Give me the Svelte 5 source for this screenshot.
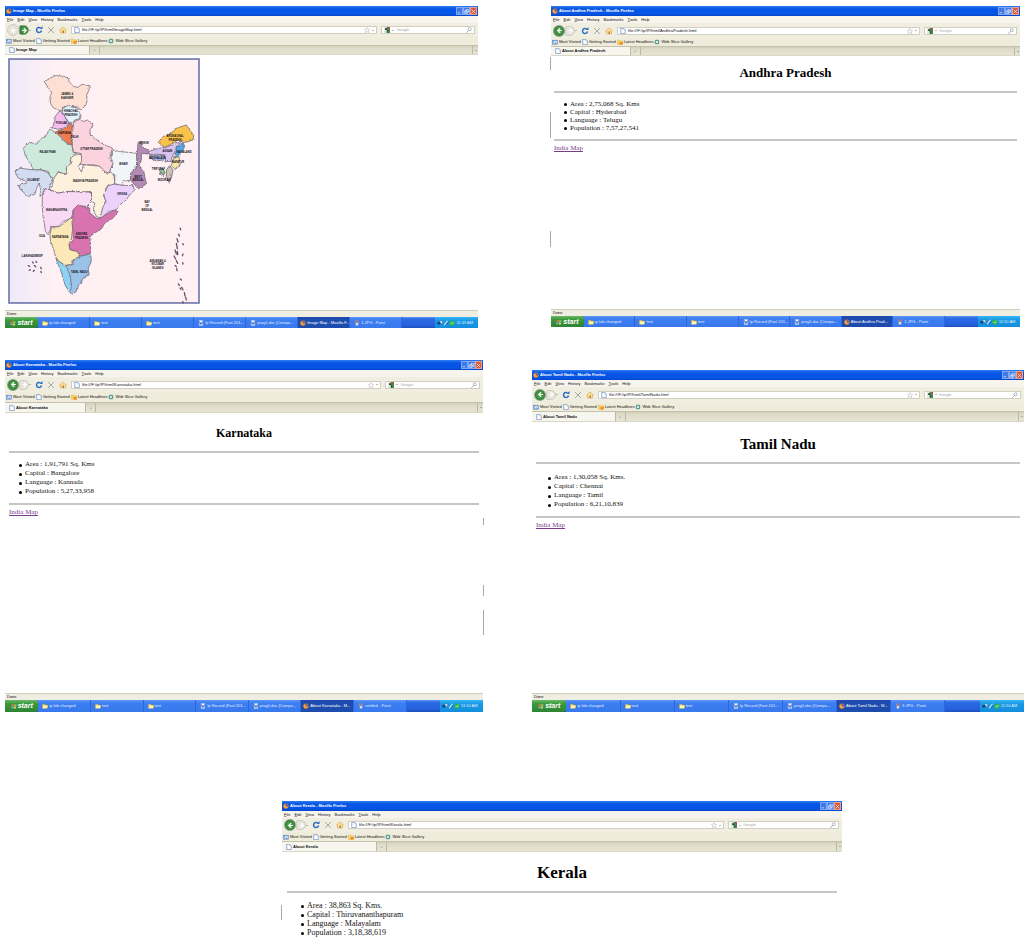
<script>
  const menus = ['File', 'Edit', 'View', 'History', 'Bookmarks', 'Tools', 'Help'];

  const windows = [
    { id: 'map', title: 'Image Map', task: 'Image Map - Mozilla F...', file: 'ImageMap', place: 'w1', map: true, paint: '1.JPG - Paint', time: '11:49 AM', marks: [] },
    {
      id: 'andhra', title: 'About Andhra Pradesh', task: 'About Andhra Prad...', file: 'AndhraPradesh', place: 'w2', heading: 'Andhra Pradesh',
      facts: ['Area : 2,75,068 Sq. Kms', 'Capital : Hyderabad', 'Language : Telugu', 'Population : 7,57,27,541'],
      link: true, paint: '1.JPG - Paint', time: '11:50 AM',
      marks: [[16, 4], [33, 8], [70, 5]]
    },
    {
      id: 'karnataka', title: 'About Karnataka', task: 'About Karnataka - M...', file: 'Karnataka', place: 'w3', heading: 'Karnataka',
      facts: ['Area : 1,91,791 Sq. Kms', 'Capital : Bangalore', 'Language : Kannada', 'Population : 5,27,33,958'],
      link: true, paint: 'untitled - Paint', time: '11:50 AM',
      marks: [[45, 2], [64, 3], [71, 7]]
    },
    {
      id: 'tamil', title: 'About Tamil Nadu', task: 'About Tamil Nadu - M...', file: 'TamilNadu', place: 'w4', heading: 'Tamil Nadu',
      facts: ['Area : 1,30,058 Sq. Kms.', 'Capital : Chennai', 'Language : Tamil', 'Population : 6,21,10,839'],
      link: true, paint: '3.JPG - Paint', time: '11:50 AM', marks: []
    },
    {
      id: 'kerala', title: 'About Kerala', file: 'Kerala', place: 'w5', heading: 'Kerala',
      facts: ['Area : 38,863 Sq. Kms.', 'Capital : Thiruvananthapuram', 'Language : Malayalam', 'Population : 3,18,38,619'],
      marks: [[73, 10]]
    }
  ];

  const rows = [windows.slice(0, 2), windows.slice(2, 4), windows.slice(4)];

  const states = [
    ['#fde0d3', 'M133 80L150 70 165 62 190 63 205 70 208 80 222 95 235 97 245 88 258 90 268 92 268 105 260 120 262 135 258 150 243 165 230 155 215 155 192 155 185 168 170 163 158 157 152 145 150 128 155 112 145 98Z'],
    ['#e3f4fb', 'M188 160L205 151 215 157 230 158 240 175 243 190 225 195 215 207 205 200 195 185 187 172Z'],
    ['#f5bdf0', 'M180 168L190 175 200 195 208 205 195 218 175 223 155 218 165 200 165 185Z'],
    ['#ee7c50', 'M165 232L180 225 200 220 208 205 218 210 215 230 218 245 212 250 218 265 210 270 200 262 190 262 185 245 175 240Z'],
    ['#fbd3df', 'M222 200L240 193 250 200 262 195 280 210 270 225 272 240 300 262 320 272 338 280 332 300 330 315 340 325 330 350 320 355 300 335 280 330 260 330 240 328 245 310 240 295 220 292 218 270 215 250 218 230Z'],
    ['#cdeadc', 'M150 222L170 235 185 250 200 265 215 270 220 292 235 300 210 315 215 325 200 340 195 360 175 350 165 372 150 365 145 350 125 345 100 345 90 325 75 300 70 280 90 262 110 268 125 250 140 240Z'],
    ['#d3dcf0', 'M45 350L60 340 100 345 125 345 145 355 158 375 150 395 145 410 135 400 128 418 120 425 122 405 118 385 110 400 105 418 85 425 62 405 55 392 80 385 75 378 55 370Z'],
    ['#fdf0dc', 'M160 372L175 352 200 358 200 335 215 325 210 310 230 297 245 300 245 320 235 335 245 352 250 330 280 332 300 335 322 358 340 345 345 380 340 395 325 390 318 400 312 420 318 440 310 460 300 490 290 485 280 465 285 445 275 440 275 410 250 412 230 410 200 410 175 415 150 405 158 390Z'],
    ['#f1f5f7', 'M340 285L360 290 380 292 410 295 412 320 408 340 392 355 395 375 370 380 365 392 345 388 345 360 330 350 340 325 332 305Z'],
    ['#b58ab5', 'M415 262L425 260 425 275 445 285 448 298 425 295 425 315 418 335 432 350 440 385 430 395 415 402 400 385 392 375 392 358 410 340 412 300Z'],
    ['#ecd2fa', 'M325 392L345 388 370 392 400 392 405 405 390 420 380 435 360 450 350 465 325 470 305 490 300 490 310 455 318 440 312 420Z'],
    ['#f9d9f3', 'M127 425L135 402 150 405 175 415 200 410 275 412 275 440 260 455 235 452 220 465 215 490 190 500 175 515 155 515 145 540 137 530 130 490 127 455Z'],
    ['#d873b0', 'M220 465L235 450 245 455 270 458 270 475 290 490 300 492 325 475 345 467 355 470 340 490 315 505 305 522 285 535 270 545 272 570 272 595 240 605 230 590 210 585 207 570 220 555 218 510Z'],
    ['#fbe8b6', 'M150 540L155 518 180 515 200 500 215 487 218 520 215 550 207 570 210 585 235 592 238 605 220 615 215 630 195 632 170 615 160 580 152 560Z'],
    ['#9bc2e8', 'M200 632L218 630 222 615 245 605 272 597 275 620 265 640 268 660 250 670 238 690 228 712 215 720 208 710 215 695 205 660Z'],
    ['#8ed2f4', 'M168 612L190 630 203 640 212 670 215 700 208 712 195 690 185 655Z'],
    ['#f9c24c', 'M475 262L490 245 515 235 530 220 560 210 570 225 582 240 580 255 560 262 540 255 520 265 495 277Z'],
    ['#d8c3ee', 'M447 290L470 282 500 277 525 268 545 260 530 280 520 300 512 320 498 320 495 300 470 298 450 300Z'],
    ['#a2b6df', 'M450 300L495 302 495 315 470 318 452 312Z'],
    ['#4fa8e4', 'M530 278L550 262 555 275 545 295 525 310Z'],
    ['#fbe6a0', 'M520 312L538 305 542 330 525 342 515 332Z'],
    ['#c9c3b4', 'M500 345L510 332 520 345 515 370 508 383 500 365Z'],
    ['#8dbd98', 'M480 345L495 335 492 365 482 358Z']
  ];

  const labels = [
    [202, 121, 'JAMMU &'], [202, 132, 'KASHMIR'], [213, 172, 'HIMACHAL'], [213, 183, 'PRADESH'],
    [185, 208, 'PUNJAB'], [194, 236, 'HARYANA'], [224, 250, 'DELHI'], [143, 294, 'RAJASTHAN'],
    [275, 284, 'UTTAR PRADESH'], [100, 379, 'GUJARAT'], [257, 382, 'MADHYA PRADESH'], [371, 331, 'BIHAR'],
    [415, 368, 'WEST'], [415, 379, 'BENGAL'], [367, 421, 'ORISSA'], [170, 470, 'MAHARASHTRA'],
    [245, 542, 'ANDHRA'], [245, 553, 'PRADESH'], [181, 551, 'KARNATAKA'], [238, 655, 'TAMIL NADU'],
    [126, 546, 'GOA'], [433, 266, 'SIKKIM'], [503, 291, 'ASSAM'], [473, 312, 'MEGHALAYA'],
    [553, 293, 'NAGALAND'], [535, 325, 'MANIPUR'], [474, 346, 'TRIPURA'], [493, 380, 'MIZORAM'],
    [526, 247, 'ARUNACHAL'], [526, 257, 'PRADESH'],
    [442, 444, 'BAY'], [442, 456, 'OF'], [442, 468, 'BENGAL'],
    [97, 607, 'LAKSHADWEEP'], [474, 621, 'ANDAMAN &'], [474, 632, 'NICOBAR'], [474, 643, 'ISLANDS']
  ];

  const islands = 'M85 633l4 2M98 622l2 3M108 620l2 3M103 632l4 4M88 647l3-2M100 650l3-3M122 638l2 4M123 650l1 4M541 520l2 5M537 538l2 6M532 552l3 10M530 566l3 16M526 586l4 12M533 590l1 10M523 604l5 9M530 618l4 8M526 632l4 4M531 642l1 6M549 567l2 3M550 598l-2 5M549 624l1 4M542 673l3 3M536 688l3 4M546 698l4 8M541 700l2 4M554 714l2 10M558 728l2 8M549 741l2 4';

  function tasks(w) {
    return [
      ['folder', 'ip lab changed'], ['folder', 'test'], ['folder', 'test'],
      ['doc', 'Ip Record (Fast 201...'], ['doc', 'prog1.doc [Compa...'],
      ['fox', w.task], ['paint', w.paint]
    ];
  }
</script>

{#snippet icon(name)}
  <svg class="icon" viewBox="0 0 16 16" aria-hidden="true">
    {#if name === 'folder'}
      <path d="M1 3h6l2 2h6v9H1z" fill="#f8dc68" stroke="#b8963a" /><path d="M4 7h11l-2 7H1z" fill="#fff6b8" />
    {:else if name === 'doc'}
      <path d="M3 1h10v14H3z" fill="#f4f8ff" stroke="#9bb6e8" /><path d="M4 4l2 8 2-6 2 6 2-8" fill="none" stroke="#3c62b8" stroke-width="2" />
    {:else if name === 'fox'}
      <circle cx="8" cy="8" r="7" fill="#e6762c" /><circle cx="9" cy="7" r="4" fill="#3d66ba" /><path d="M2 5q4-2 6 2t6 3q-2 5-8 4T2 5" fill="#f6a23a" />
    {:else if name === 'paint'}
      <path d="M4 7h8l-1 8H5z" fill="#dce6f4" stroke="#6b81a4" /><path d="M5 7L3 1M8 7V1M11 7l2-6" stroke="#e38650" stroke-width="2" />
    {:else if name === 'page'}
      <path d="M2 1h8l4 4v10H2z" fill="#fff" stroke="#6d92c6" stroke-width="2" /><path d="M10 1v4h4" fill="#dfe9f8" stroke="#6d92c6" />
    {:else if name === 'visited'}
      <rect x="1" y="3" width="14" height="11" fill="#7ea7e0" stroke="#4a70b5" /><path d="M3 10h4V6h4v4h3" stroke="#fff" fill="none" stroke-width="2" />
    {:else if name === 'feed'}
      <path d="M1 3h6l2 2h6v9H1z" fill="#f9d45c" stroke="#d8a030" /><rect x="7" y="8" width="8" height="7" fill="#f08a28" />
    {:else if name === 'gallery'}
      <rect x="2" y="2" width="12" height="12" rx="3" fill="#5e9c94" /><path d="M5 5l6 6M11 5l-6 6" stroke="#fff" stroke-width="2" />
    {:else if name === 'reload'}
      <path d="M13 9a5 5 0 1 1-2-5" fill="none" stroke="#2f6dc0" stroke-width="3" /><path d="M9 6h6V0z" fill="#2f6dc0" />
    {:else if name === 'stop'}
      <path d="M2 2l12 12M14 2L2 14" stroke="#aaa89e" stroke-width="2" />
    {:else if name === 'home'}
      <path d="M1 8l7-6 7 6h-2v6H3V8z" fill="#fbe292" stroke="#d19a4c" /><rect x="7" y="9" width="3" height="5" fill="#b9793a" />
    {:else if name === 'star'}
      <path d="M8 1l2 5h5l-4 4 2 5-5-3-5 3 2-5-4-4h5z" fill="#fff" stroke="#9a9a9a" />
    {:else if name === 'google'}
      <rect width="16" height="16" fill="#3e8a50" /><path d="M0 0h7v16H0z" fill="#dfe9df" /><path d="M3 3h5v5l3 2-3 5V8H3z" fill="#203f35" /><path d="M12 0h4v7h-4z" fill="#c9453a" />
    {:else if name === 'lens'}
      <circle cx="10" cy="6" r="4" fill="none" stroke="#8fa2b4" stroke-width="2" /><path d="M7 9l-6 6" stroke="#8b8b8b" stroke-width="2" />
    {:else if name === 'flag'}
      <path d="M2 3q3-2 6 0L7 8Q4 6 1 8z" fill="#ef6a3c" /><path d="M9 3q3 2 6 0l-1 5q-3 2-6 0z" fill="#8fd15a" /><path d="M1 9q3-2 6 0l-1 5q-3-2-6 0z" fill="#6fa8f0" /><path d="M8 9q3 2 6 0l-1 5q-3 2-6 0z" fill="#f8d24a" />
    {:else if name === 'net'}
      <rect x="1" y="5" width="8" height="7" fill="#1b3f78" /><path d="M6 2h9v7h-5z" fill="#c4e4fa" stroke="#234d86" />
    {:else if name === 'tools'}
      <path d="M3 14L12 2" stroke="#e7edf4" stroke-width="3" /><path d="M9 12l5-5" stroke="#1e4d7c" stroke-width="2" />
    {:else if name === 'shield'}
      <circle cx="8" cy="8" r="7" fill="#35b24a" /><path d="M4 8l3 3 5-6" stroke="#d6f5c8" stroke-width="2" fill="none" />
    {/if}
  </svg>
{/snippet}

{#snippet browser(w)}
  <section class="window {w.place}" aria-label={w.title}>
    <div class="titlebar">
      {@render icon('fox')}
      <span class="title">{w.title} - Mozilla Firefox</span>
      <button class="ctl" aria-label="Minimize"><svg viewBox="0 0 8 8"><path d="M1 6h4" /></svg></button>
      <button class="ctl" aria-label="Restore"><svg viewBox="0 0 8 8"><path d="M3 1h4v4H3zM1 3h4v4H1z" /></svg></button>
      <button class="ctl close" aria-label="Close"><svg viewBox="0 0 8 8"><path d="M1 1l6 6M7 1L1 7" /></svg></button>
    </div>
    <nav class="menubar">
      {#each menus as m}<button><u>{m[0]}</u>{m.slice(1)}</button>{/each}
    </nav>
    <div class="toolbar">
      <div class="travel">
        <button class="round" class:off={w.map} aria-label="Back"><svg viewBox="0 0 12 12"><path d="M7 2L3 6l4 4M3 6h7" /></svg></button>
        <button class="round fwd" class:off={!w.map} aria-label="Forward"><svg viewBox="0 0 12 12"><path d="M5 2l4 4-4 4M9 6H2" /></svg></button>
        <i class="caret"></i>
      </div>
      <button class="tool" aria-label="Reload">{@render icon('reload')}</button>
      <button class="tool" aria-label="Stop">{@render icon('stop')}</button>
      <button class="tool" aria-label="Home">{@render icon('home')}</button>
      <div class="field address">
        {@render icon('page')}
        <input aria-label="Address" value={`file:///F:/ip/IP/html/${w.file}.html`} />
        {@render icon('star')}
        <i class="caret"></i>
      </div>
      <div class="field search">
        {@render icon('google')}
        <i class="caret"></i>
        <input aria-label="Search" placeholder="Google" />
        {@render icon('lens')}
      </div>
    </div>
    <div class="bookmarks">
      <button>{@render icon('visited')}Most Visited</button>
      <button>{@render icon('page')}Getting Started</button>
      <button>{@render icon('feed')}Latest Headlines</button>
      <button>{@render icon('gallery')}Web Slice Gallery</button>
    </div>
    <div class="tabs">
      <button class="tab">{@render icon('page')}{w.title}</button>
      <button class="plus" aria-label="New tab">+</button>
      <button class="all" aria-label="All tabs"><i class="caret"></i></button>
    </div>
    <div class="page" class:mapped={w.map}>
      {#if w.map}
        <svg class="india" viewBox="24 9 577 739" role="img" aria-label="Map of India">
          <defs>
            <filter id="coast" x="-5%" y="-5%" width="110%" height="110%">
              <feTurbulence type="fractalNoise" baseFrequency="0.12" numOctaves="2" seed="4" />
              <feDisplacementMap in="SourceGraphic" scale="8" xChannelSelector="R" yChannelSelector="G" />
            </filter>
            <linearGradient id="sea">
              <stop offset="0" stop-color="#eeeafa" /><stop offset="0.25" stop-color="#fff1f3" />
            </linearGradient>
          </defs>
          <rect x="27" y="12" width="571" height="733" fill="url(#sea)" stroke="#7278ae" stroke-width="5" />
          <g filter="url(#coast)" stroke="#5f5866" stroke-width="2" stroke-linejoin="round">
            {#each states as [fill, d]}<path {fill} {d} />{/each}
          </g>
          <path d={islands} fill="none" stroke="#66506e" stroke-width="4" stroke-linecap="round" />
          <g class="names">
            {#each labels as [x, y, text]}<text {x} {y}>{text}</text>{/each}
          </g>
        </svg>
      {:else}
        <h1>{w.heading}</h1>
        <hr />
        <ul>
          {#each w.facts as f}<li>{f}</li>{/each}
        </ul>
        {#if w.link}
          <hr />
          <a href="#map">India Map</a>
        {/if}
      {/if}
    </div>
    {#if w.paint}
      <div class="status">Done</div>
      <div class="taskbar">
        <button class="start">{@render icon('flag')}start</button>
        {#each tasks(w) as [kind, text]}
          <button class="task" class:active={kind === 'fox'}>{@render icon(kind)}<span>{text}</span></button>
        {/each}
        <div class="tray">
          {@render icon('net')}{@render icon('tools')}{@render icon('shield')}
          <time>{w.time}</time>
        </div>
      </div>
    {/if}
    {#each w.marks as [top, height]}
      <i class="mark" style="top: {top}%; height: {height}%"></i>
    {/each}
  </section>
{/snippet}

<main>
  {#each rows as row, i}
    <div class="row row{i + 1}">
      {#each row as w (w.id)}{@render browser(w)}{/each}
    </div>
  {/each}
</main>

<style>
  :global(body) { margin: 0; background: #fff; }
  main { overflow: hidden; }
  .row { display: grid; align-items: end; }
  .row1 { grid-template-columns: 473fr 469fr; column-gap: 73px; padding: 6px 4px 0 5px; align-items: start; }
  .row2 { grid-template-columns: 478fr 492fr; column-gap: 49px; padding: 32px 0 0 5px; }
  .row3 { grid-template-columns: 282fr 560fr 182fr; padding-top: 89px; }

  .window {
    --nav: 14px; --bm: 8px; --tab: 10px; --tabw: 18%;
    --h1: 13px; --li: 7px; --lh: 8px; --top: 10px; --gap: 11px; --list: 7px; --indent: 16px;
    --inset: 3px; --body: 253px; --tb: 11px;
    position: relative; display: flex; flex-direction: column; min-width: 0;
    font: 4px/6px "Liberation Sans", Arial, sans-serif; color: #111;
  }
  .w2 { --nav: 15px; --tabw: 17%; }
  .w3 { --nav: 15px; --bm: 10px; --tab: 11px; --h1: 12px; --lh: 9px; --top: 13px; --inset: 4px; --body: 280px; --tb: 12px; --tabw: 17%; }
  .w4 { --nav: 15px; --bm: 9px; --tab: 11px; --h1: 15px; --lh: 9px; --top: 15px; --inset: 4px; --list: 9px; --indent: 18px; --body: 271px; --tb: 12px; --tabw: 17%; }
  .w5 { --nav: 14px; --bm: 9px; --tab: 11px; --h1: 17px; --li: 8px; --lh: 9px; --top: 14px; --inset: 5px; --list: 8px; --indent: 20px; --body: 91px; --tabw: 17%; grid-column: 2; }

  button, input { font: inherit; color: inherit; border: 0; padding: 0; margin: 0; background: none; min-width: 0; }
  button { display: flex; align-items: center; justify-content: center; white-space: nowrap; }
  svg { display: block; flex: none; }
  .icon { width: 6px; height: 6px; }
  .caret { flex: none; border: 1px solid transparent; border-top-color: #777; border-bottom: 0; }

  .titlebar {
    display: flex; align-items: center; height: 10px; padding: 0 1px;
    background: linear-gradient(#2f7cf0, #0555e6 30%, #0554e4 80%, #0344c8); color: #fff; font-weight: bold;
  }
  .title { flex: 1; white-space: nowrap; padding-left: 1px; }
  .ctl { width: 7px; height: 8px; box-sizing: border-box; background: #3f78e8; border: 1px solid #7ea6f2; }
  .ctl svg { width: 5px; height: 5px; }
  .ctl path { fill: none; stroke: #fff; stroke-width: 1; }
  .close { background: #d9593a; border-color: #e8a08c; }

  .menubar { display: flex; align-items: center; gap: 4px; height: 7px; padding-left: 2px; background: #f6f4ec; }
  .menubar u { text-decoration-thickness: 1px; text-underline-offset: 0; text-decoration-color: #999; }

  .toolbar { display: flex; align-items: center; gap: 4px; height: var(--nav); padding: 0 3px 0 2px; background: #f0eee0; }
  .travel { display: flex; align-items: center; }
  .round { width: 12px; height: 12px; box-sizing: border-box; border-radius: 50%; background: radial-gradient(#5cb254, #226c2a); border: 1px solid #8aa388; }
  .round svg { width: 7px; height: 7px; }
  .round path { fill: none; stroke: #fff; stroke-width: 2; }
  .fwd { width: 10px; height: 10px; border-radius: 2px 5px 5px 2px; }
  .off { background: #e6e4da; border-color: #cfccc0; }
  .tool .icon { width: 8px; height: 8px; }
  .field { display: flex; align-items: center; gap: 2px; height: 8px; box-sizing: border-box; padding: 0 2px; background: #fff; border: 1px solid #d2cfbf; }
  .field input { flex: 1; height: 6px; outline: 0; }
  .address { flex: 1; }
  .search { width: 20%; }
  .search input::placeholder { color: #aaa; opacity: 1; }

  .bookmarks { display: flex; align-items: center; gap: 1px; height: var(--bm); padding-left: 1px; background: #efecdc; }
  .bookmarks button { gap: 1px; }

  .tabs { display: flex; align-items: stretch; height: var(--tab); background: linear-gradient(#d3d0b8, #dfdcc9 30%, #e6e4d3); border-bottom: 1px solid #dad7c5; border-top: 1px solid #c4c1ae; box-sizing: border-box; }
  .tab { width: var(--tabw); justify-content: flex-start; gap: 1px; padding-left: 4px; background: #f7f6ee; font-weight: bold; border-right: 1px solid #bbb9aa; }
  .plus { width: 10px; border-right: 1px solid #bbb9aa; color: #777; }
  .all { width: 6px; margin-left: auto; border-left: 1px solid #bbb9aa; }

  .page { min-height: var(--body); box-sizing: border-box; padding: var(--top) var(--inset) 0; font-family: "Liberation Serif", "Times New Roman", serif; font-size: var(--li); line-height: var(--lh); color: #111; }
  .mapped { padding: 3px 3px 6px; }
  .india { width: 192px; height: 246px; }
  .names { font: bold 8px "Liberation Sans", Arial, sans-serif; text-anchor: middle; fill: #15121c; }
  h1 { margin: 0 0 var(--gap); font-size: var(--h1); line-height: 14px; text-align: center; color: #000; }
  hr { margin: 0; border: 0; height: 2px; background: #c6c6c6; }
  ul { margin: var(--list) 0 7px; padding-left: var(--indent); list-style: none; }
  li { position: relative; }
  li::before { content: ""; position: absolute; left: -6px; top: calc(50% - 1px); width: 3px; height: 3px; border-radius: 50%; background: #000; }
  a { color: #7a3c8c; display: inline-block; margin-top: 3px; text-decoration-thickness: 1px; }

  .status { height: 7px; padding-left: 2px; box-sizing: border-box; background: #f0eee2; border-top: 1px solid #cfcdbb; line-height: 6px; }
  .taskbar { display: flex; height: var(--tb); background: linear-gradient(#5a94f4, #2c6ae6 20%, #2560da 80%, #1c4fb8); color: #e2edff; }
  .start { width: 7%; gap: 1px; background: linear-gradient(#6cb968, #3a9a3c 30%, #2e8332); color: #fff; font-size: 7px; font-weight: bold; font-style: italic; border-radius: 0 3px 3px 0; }
  .task { flex: 0 0 11%; gap: 1px; justify-content: flex-start; padding-left: 4px; box-sizing: border-box; background: linear-gradient(#5c97fa, #3c7ff2 25%, #3878ec); border-right: 1px solid #2c66dc; }
  .active { background: #1e4cae; color: #fff; padding-left: 2px; }
  .tray { display: flex; align-items: center; width: 9%; box-sizing: border-box; margin-left: auto; padding-left: 2px; background: linear-gradient(#38b6f6, #189be8 30%, #148ddc); white-space: nowrap; }
  .tray time { margin-left: 1px; }

  .mark { position: absolute; left: -1px; width: 1px; background: #a9a9a9; }
  .w3 .mark { left: 100%; }
</style>
